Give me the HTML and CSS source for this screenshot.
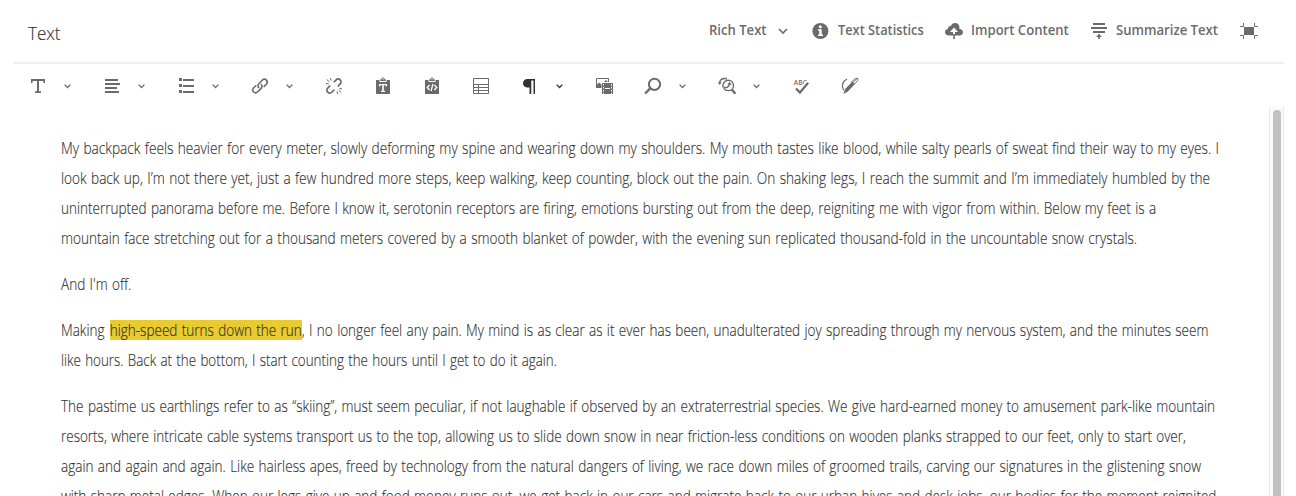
FILE: index.html
```
<!DOCTYPE html>
<html lang="en">
<head>
<meta charset="utf-8">
<title>Text</title>
<link rel="stylesheet" href="styles.css">
</head>
<body>
<svg class="defs">
  <symbol id="chev" viewBox="0 0 11 20"><path d="M2.600 8.600l2.900 2.900 2.900-2.900" fill="none" stroke="currentColor" stroke-width="1.300"/></symbol>
</svg>
<div class="editor">
  <header class="header">
    <h1 class="title">Text</h1>
    <div class="actions">
      <button class="action rich"><span class="label w-rich">Rich Text</span>
        <svg class="caret" viewBox="0 0 12 20"><path d="M2 9l4 4 4-4" fill="none" stroke="currentColor" stroke-width="1.600"/></svg></button>
      <button class="action stats"><svg class="icon" viewBox="0 0 20 20"><circle cx="10.400" cy="11" r="8" fill="currentColor"/><circle cx="10.300" cy="6.800" r="1.500" fill="#fff"/><path d="M8 9.200h3.700v5.400H13v1.500H8v-1.500h1.300v-3.900H8z" fill="#fff"/></svg><span class="label w-stats">Text Statistics</span></button>
      <button class="action import"><svg class="icon" viewBox="0 0 20 20"><path d="M4.700 15.400C2.500 15.400 1 14 1 12.200c0-1.700 1.200-3 2.900-3.100C3.800 7 5.100 5.700 6.800 5.900 7.500 4 9.100 3 11 3c2.700 0 4.600 2 4.500 4.700-.1.500-.1.900-.2 1.300C17.400 8.800 19 10.200 19 12.200s-1.400 3.200-3.400 3.200z" fill="currentColor"/><path d="M10 7.600l4 4.500h-3v3.300H9v-3.300H6z" fill="#fff"/><path d="M9.200 14h1.700v5H9.200z" fill="currentColor"/></svg><span class="label w-import">Import Content</span></button>
      <button class="action summary"><svg class="icon" viewBox="0 0 20 20"><path d="M4 3h12v2H4zM2 7h16v2H2zM4 11h12v2H4zM9.200 15.500h1.600V19H9.200zM10 13.800l2.900 3.200H7.100z" fill="currentColor"/></svg><span class="label w-summary">Summarize Text</span></button>
      <button class="action full"><svg class="icon" viewBox="0 0 20 20"><path d="M5 7h10v8H5z" fill="currentColor"/><path d="M1 6.500h3.500V3M19 6.500h-3.500V3M1 15.500h3.500V19M19 15.500h-3.500V19" fill="none" stroke="currentColor" stroke-width="1"/></svg></button>
    </div>
  </header>

  <nav class="toolbar">
    <button class="tool"><svg class="icon" viewBox="0 0 20 20"><path d="M3 3h14v4h-1.600V5H11v10.200h2V17H7v-1.800h2V5H4.600v2H3z" fill="currentColor"/></svg><svg class="chev"><use href="#chev"/></svg></button>
    <button class="tool"><svg class="icon" viewBox="0 0 20 20"><path d="M3 3h13v2H3zM3 7h15v2H3zM3 11h12v2H3zM3 15h14v2H3z" fill="currentColor"/></svg><svg class="chev"><use href="#chev"/></svg></button>
    <button class="tool"><svg class="icon" viewBox="0 0 20 20"><path d="M3 2h3v3H3zM3 8h3v3H3zM3 14h3v3H3zM7 3h11v2H7zM7 9h11v2H7zM7 15h11v2H7z" fill="currentColor"/></svg><svg class="chev"><use href="#chev"/></svg></button>
    <button class="tool"><svg class="icon" viewBox="0 0 20 20"><g fill="none" stroke="currentColor" stroke-width="1.600"><path d="M9.200 11.900C7.700 10.900 7.600 9 8.900 7.700l3.300-3.400c1.300-1.300 3.100-1.200 4.200-.2 1.100 1.100 1.100 2.900-.1 4.200l-2.600 2.600"/><path d="M10.800 8.200c1.500 1 1.600 2.900.3 4.200l-3.300 3.400c-1.300 1.300-3.100 1.200-4.200.2-1.100-1.100-1.100-2.900.1-4.200l2.600-2.600"/></g></svg><svg class="chev"><use href="#chev"/></svg></button>
    <button class="tool"><svg class="icon" viewBox="0 0 20 20"><g fill="none" stroke="currentColor"><path stroke-width="1.700" d="M9.800 6.200l2.100-2.100c1.300-1.300 3.200-1.300 4.300-.2s1.100 3-.2 4.300l-2.300 2.300M10.300 13.700L8 16c-1.300 1.300-3.200 1.300-4.300.2s-1.100-3 .2-4.300l2.300-2.300"/><path stroke-width="1" d="M2.800 3.500l2.700 2.500M6.300 2l.9 2.600M2 7.400l2.800.6M14.600 14l2.800 2.700M13 15.400l.8 2.600M15.300 12.300l2.700.7"/></g></svg></button>
    <button class="tool"><svg class="icon" viewBox="0 0 20 20"><path d="M3 4h3.500v2h7V4H17v14H3z" fill="currentColor"/><path d="M7.300 5V3.300h1.200C8.500 0.900 11.500 0.900 11.500 3.300h1.200V5z" fill="currentColor"/><circle cx="10" cy="3" r=".7" fill="#fff"/><path d="M6 8h8v2.600h-1.200V9.300h-2v5.400H12V16H8v-1.300h1.200V9.300h-2v1.300H6z" fill="#fff"/></svg></button>
    <button class="tool"><svg class="icon" viewBox="0 0 20 20"><path d="M3 4h3.500v2h7V4H17v14H3z" fill="currentColor"/><path d="M7.300 5V3.300h1.200C8.500 0.900 11.500 0.900 11.500 3.300h1.200V5z" fill="currentColor"/><circle cx="10" cy="3" r=".7" fill="#fff"/><path d="M7.600 9L5.200 11.500 7.600 14M12.400 9l2.400 2.500-2.400 2.500M10.900 8l-1.800 7" fill="none" stroke="#fff" stroke-width="1.300"/></svg></button>
    <button class="tool"><svg class="icon" viewBox="0 0 20 20"><path d="M2.500 2.500h15v15h-15zM2.500 8.500h15M2.500 11.500h15M2.500 14.500h15M7.500 8.500v9" fill="none" stroke="currentColor"/></svg></button>
    <button class="tool dark"><svg class="icon" viewBox="0 0 20 20"><path d="M7.500 3H15v15h-1.500V4.600h-2.200V18H9.500v-6.500h-2C4.800 11.500 3 9.800 3 7.300S4.800 3 7.500 3z" fill="currentColor"/></svg><svg class="chev"><use href="#chev"/></svg></button>
    <button class="tool"><svg class="icon" viewBox="0 0 20 20"><path d="M2.500 11V2.500h12v3.500" fill="none" stroke="currentColor"/><path d="M2 12V9.500L5 6.500l2.500 2V12zM10 6l2-2 2 2z" fill="currentColor"/><path d="M8 7h11v11H8z" fill="currentColor"/><path d="M11 12.500h5" stroke="#fff"/><path d="M9.500 8v10M17.500 8v10" stroke="#fff" stroke-dasharray="1.500 1.500"/></svg></button>
    <button class="tool"><svg class="icon" viewBox="0 0 20 20"><circle cx="11.500" cy="8.300" r="5.600" fill="none" stroke="currentColor" stroke-width="2"/><path d="M7.300 12.300l-5.200 5.200" stroke="currentColor" stroke-width="2.400"/></svg><svg class="chev"><use href="#chev"/></svg></button>
    <button class="tool"><svg class="icon" viewBox="0 0 20 20"><g fill="none" stroke="currentColor"><path stroke-width="1.400" d="M6.200 11.800C5 8 7.500 4.200 11.200 4.200c3 0 5.300 2.200 5.300 5.200s-2.300 5.200-5.300 5.200c-2 0-3.500-.8-4.500-2.300M8.500 2.500C5.500 2.300 3 3.800 2.600 6.800M7.200 11.200c2.500 1.200 4.900-.3 5.300-3.600"/><path stroke-width="2.400" d="M14.800 13.500l3.600 4.200"/></g><path d="M.8 6.200h4L2.700 9zM10.400 8.600l2.300-2.800 2 2.900zM9.800 1.200v3L7.700 2.700z" fill="currentColor"/></svg><svg class="chev"><use href="#chev"/></svg></button>
    <button class="tool"><svg class="icon" viewBox="0 0 20 20"><text class="abc" x="2.800" y="9" textLength="13">ABC</text><path d="M5.500 12.400l3.400 3.800 8-9.800" fill="none" stroke="#fff" stroke-width="4"/><path d="M5 12.400l3.900 4.100L17.200 6.700" fill="none" stroke="currentColor" stroke-width="2.200"/></svg></button>
    <button class="tool"><svg class="icon" viewBox="0 0 20 20"><path d="M7 3C3.500 5 1.700 8.800 3 12.600c.2.700.5 1.300.9 1.800" fill="none" stroke="currentColor" stroke-width="1.200"/><path d="M3.300 18l2-5.200 7.200-7.300 2.400 2.500-7 7.500z" fill="currentColor"/><path d="M11 6.500L15.500 2.400h2.300v2l-3.600 4" fill="none" stroke="currentColor" stroke-width="1"/><path d="M13 6.500l4-4" stroke="currentColor" stroke-width="1"/></svg></button>
  </nav>

  <div class="body">
    <main class="content">
      <p><span class="line l1">My backpack feels heavier for every meter, slowly deforming my spine and wearing down my shoulders. My mouth tastes like blood, while salty pearls of sweat find their way to my eyes. I</span>
      <span class="line l2">look back up, I’m not there yet, just a few hundred more steps, keep walking, keep counting, block out the pain. On shaking legs, I reach the summit and I’m immediately humbled by the</span>
      <span class="line l3">uninterrupted panorama before me. Before I know it, serotonin receptors are firing, emotions bursting out from the deep, reigniting me with vigor from within. Below my feet is a</span>
      <span class="line l4">mountain face stretching out for a thousand meters covered by a smooth blanket of powder, with the evening sun replicated thousand-fold in the uncountable snow crystals.</span></p>
      <p><span class="line l5">And I'm off.</span></p>
      <p><span class="line l6">Making <mark>high-speed turns down the run</mark>, I no longer feel any pain. My mind is as clear as it ever has been, unadulterated joy spreading through my nervous system, and the minutes seem</span>
      <span class="line l7">like hours. Back at the bottom, I start counting the hours until I get to do it again.</span></p>
      <p><span class="line l8">The pastime us earthlings refer to as “skiing”, must seem peculiar, if not laughable if observed by an extraterrestrial species. We give hard-earned money to amusement park-like mountain</span>
      <span class="line l9">resorts, where intricate cable systems transport us to the top, allowing us to slide down snow in near friction-less conditions on wooden planks strapped to our feet, only to start over,</span>
      <span class="line l10">again and again and again. Like hairless apes, freed by technology from the natural dangers of living, we race down miles of groomed trails, carving our signatures in the glistening snow</span>
      <span class="line l11">with sharp metal edges. When our legs give up and food money runs out, we get back in our cars and migrate back to our urban hives and desk jobs, our bodies for the moment reignited</span></p>
    </main>
    <div class="track"><div class="thumb"></div></div>
  </div>
</div>
</body>
</html>
```
FILE: styles.css
```
* { box-sizing: border-box; }
body {
  margin: 0;
  background: #fff;
  color: #323232;
  font-family: "Open Sans", "Noto Sans", sans-serif;
  overflow: hidden;
}
.defs { display: none; }
.editor {
  display: flex;
  flex-direction: column;
  width: 1271px;
  height: 496px;
  margin-left: 13px;
  overflow: hidden;
}
button {
  display: flex;
  align-items: center;
  flex: none;
  padding: 0;
  border: 0;
  background: none;
  color: #6b6b6b;
  font-family: inherit;
}
.icon { display: block; width: 20px; height: 20px; flex: none; }

.header {
  display: flex;
  flex: none;
  justify-content: space-between;
  height: 64px;
  padding: 0 25px 0 15px;
  border-bottom: 2px solid #f0f0f0;
}
.title {
  margin: 20px 0 0;
  font-size: 19px;
  font-weight: 300;
  line-height: 26px;
  transform: scaleX(.9);
  transform-origin: 0 0;
  -webkit-text-stroke: .15px currentColor;
}
.actions { display: flex; margin-top: 20px; height: 20px; }
.label {
  flex: none;
  font-size: 14px;
  font-weight: 600;
  line-height: 20px;
  white-space: nowrap;
  text-align: left;
  transform: scaleX(.935);
  transform-origin: 0 0;
}
.w-rich { width: 58px; }
.w-stats, .w-import, .w-summary { margin-left: 7px; }
.w-stats { margin-left: 8px; transform: scaleX(.915); }
.caret { width: 12px; height: 20px; margin-left: 10px; }
.rich { width: 101px; }
.stats { width: 134px; }
.import { width: 145px; }
.summary { width: 150px; }

.toolbar { display: flex; flex: none; gap: 29px; height: 43px; padding: 12px 0 0 15px; }
.tool { height: 20px; }
.chev { width: 11px; height: 20px; margin-left: 14px; }
.dark { color: #323232; }
.abc { font: 600 6.5px "Open Sans", sans-serif; fill: currentColor; }

.body { display: flex; flex: 1; min-height: 0; }
.content { flex: 1; min-width: 0; padding: 26px 0 0 48px; }
.content p { margin: 0 0 16px; }
.line {
  display: block;
  width: max-content;
  height: 30px;
  font-size: 16px;
  font-weight: 300;
  line-height: 30px;
  word-spacing: 1px;
  white-space: nowrap;
  transform-origin: 0 0;
  -webkit-text-stroke: .15px currentColor;
}
.l1 { transform: scaleX(.8535); }
.l2 { transform: scaleX(.8515); }
.l3 { transform: scaleX(.8454); }
.l4 { transform: scaleX(.8499); }
.l5 { transform: scaleX(.848); }
.l6 { transform: scaleX(.8456); }
.l7 { transform: scaleX(.8367); }
.l8 { transform: scaleX(.8463); }
.l9 { transform: scaleX(.8433); }
.l10 { transform: scaleX(.848); }
.l11 { transform: scaleX(.8455); }
mark { margin-left: 1px; padding: 0; background: linear-gradient(#e9cb2f, #e9cb2f) center / 100% 20px no-repeat; color: inherit; }

.track {
  flex: none;
  width: 15px;
  padding: 3px 2px 0 3px;
  background: #fafafa;
  border: 1px solid #e8e8e8;
  border-width: 0 1px;
}
.thumb { width: 8px; height: 500px; border-radius: 4px; background: #c1c1c1; }
```
